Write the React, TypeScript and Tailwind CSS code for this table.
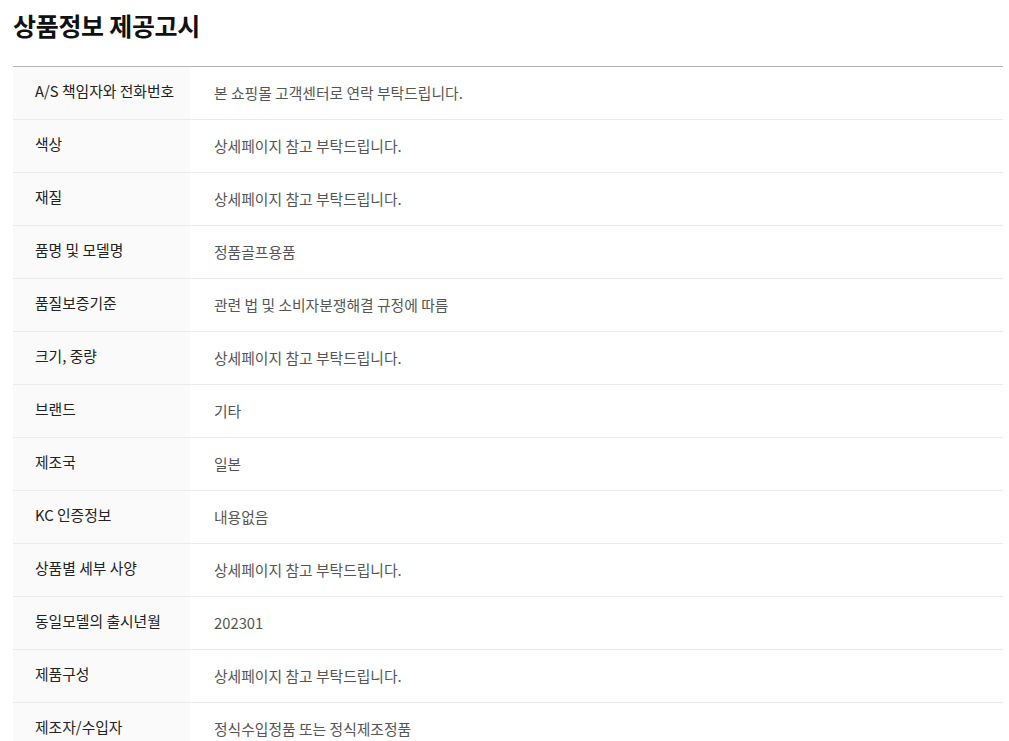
import React from "react";

const rows: [string, string][] = [
  ["A/S 책임자와 전화번호", "본 쇼핑몰 고객센터로 연락 부탁드립니다."],
  ["색상", "상세페이지 참고 부탁드립니다."],
  ["재질", "상세페이지 참고 부탁드립니다."],
  ["품명 및 모델명", "정품골프용품"],
  ["품질보증기준", "관련 법 및 소비자분쟁해결 규정에 따름"],
  ["크기, 중량", "상세페이지 참고 부탁드립니다."],
  ["브랜드", "기타"],
  ["제조국", "일본"],
  ["KC 인증정보", "내용없음"],
  ["상품별 세부 사양", "상세페이지 참고 부탁드립니다."],
  ["동일모델의 출시년월", "202301"],
  ["제품구성", "상세페이지 참고 부탁드립니다."],
  ["제조자/수입자", "정식수입정품 또는 정식제조정품"],
];

export default function App() {
  return (
    <div
      className="bg-white px-[13px] pt-[7px] pb-10 w-[1016px]"
      style={{ fontFamily: '"Noto Sans CJK KR", "Noto Sans", sans-serif' }}
    >
      <h1 className="text-[25px] leading-[37px] font-bold text-[#111] tracking-[-0.3px]">
        상품정보 제공고시
      </h1>
      <div className="mt-[22px] border-t border-[#b5b5b5] w-[990px]">
        {rows.map(([k, v], i) => (
          <div key={i} className="flex h-[53px] border-b border-[#ebebeb]">
            <div className="w-[177px] bg-[#fafafa] flex items-center pl-[22px] pb-[3px] text-[14.8px] text-[#222]">
              {k}
            </div>
            <div className="flex-1 flex items-center pl-[24px] pt-[1px] text-[14.8px] text-[#555]">
              {v}
            </div>
          </div>
        ))}
      </div>
    </div>
  );
}
